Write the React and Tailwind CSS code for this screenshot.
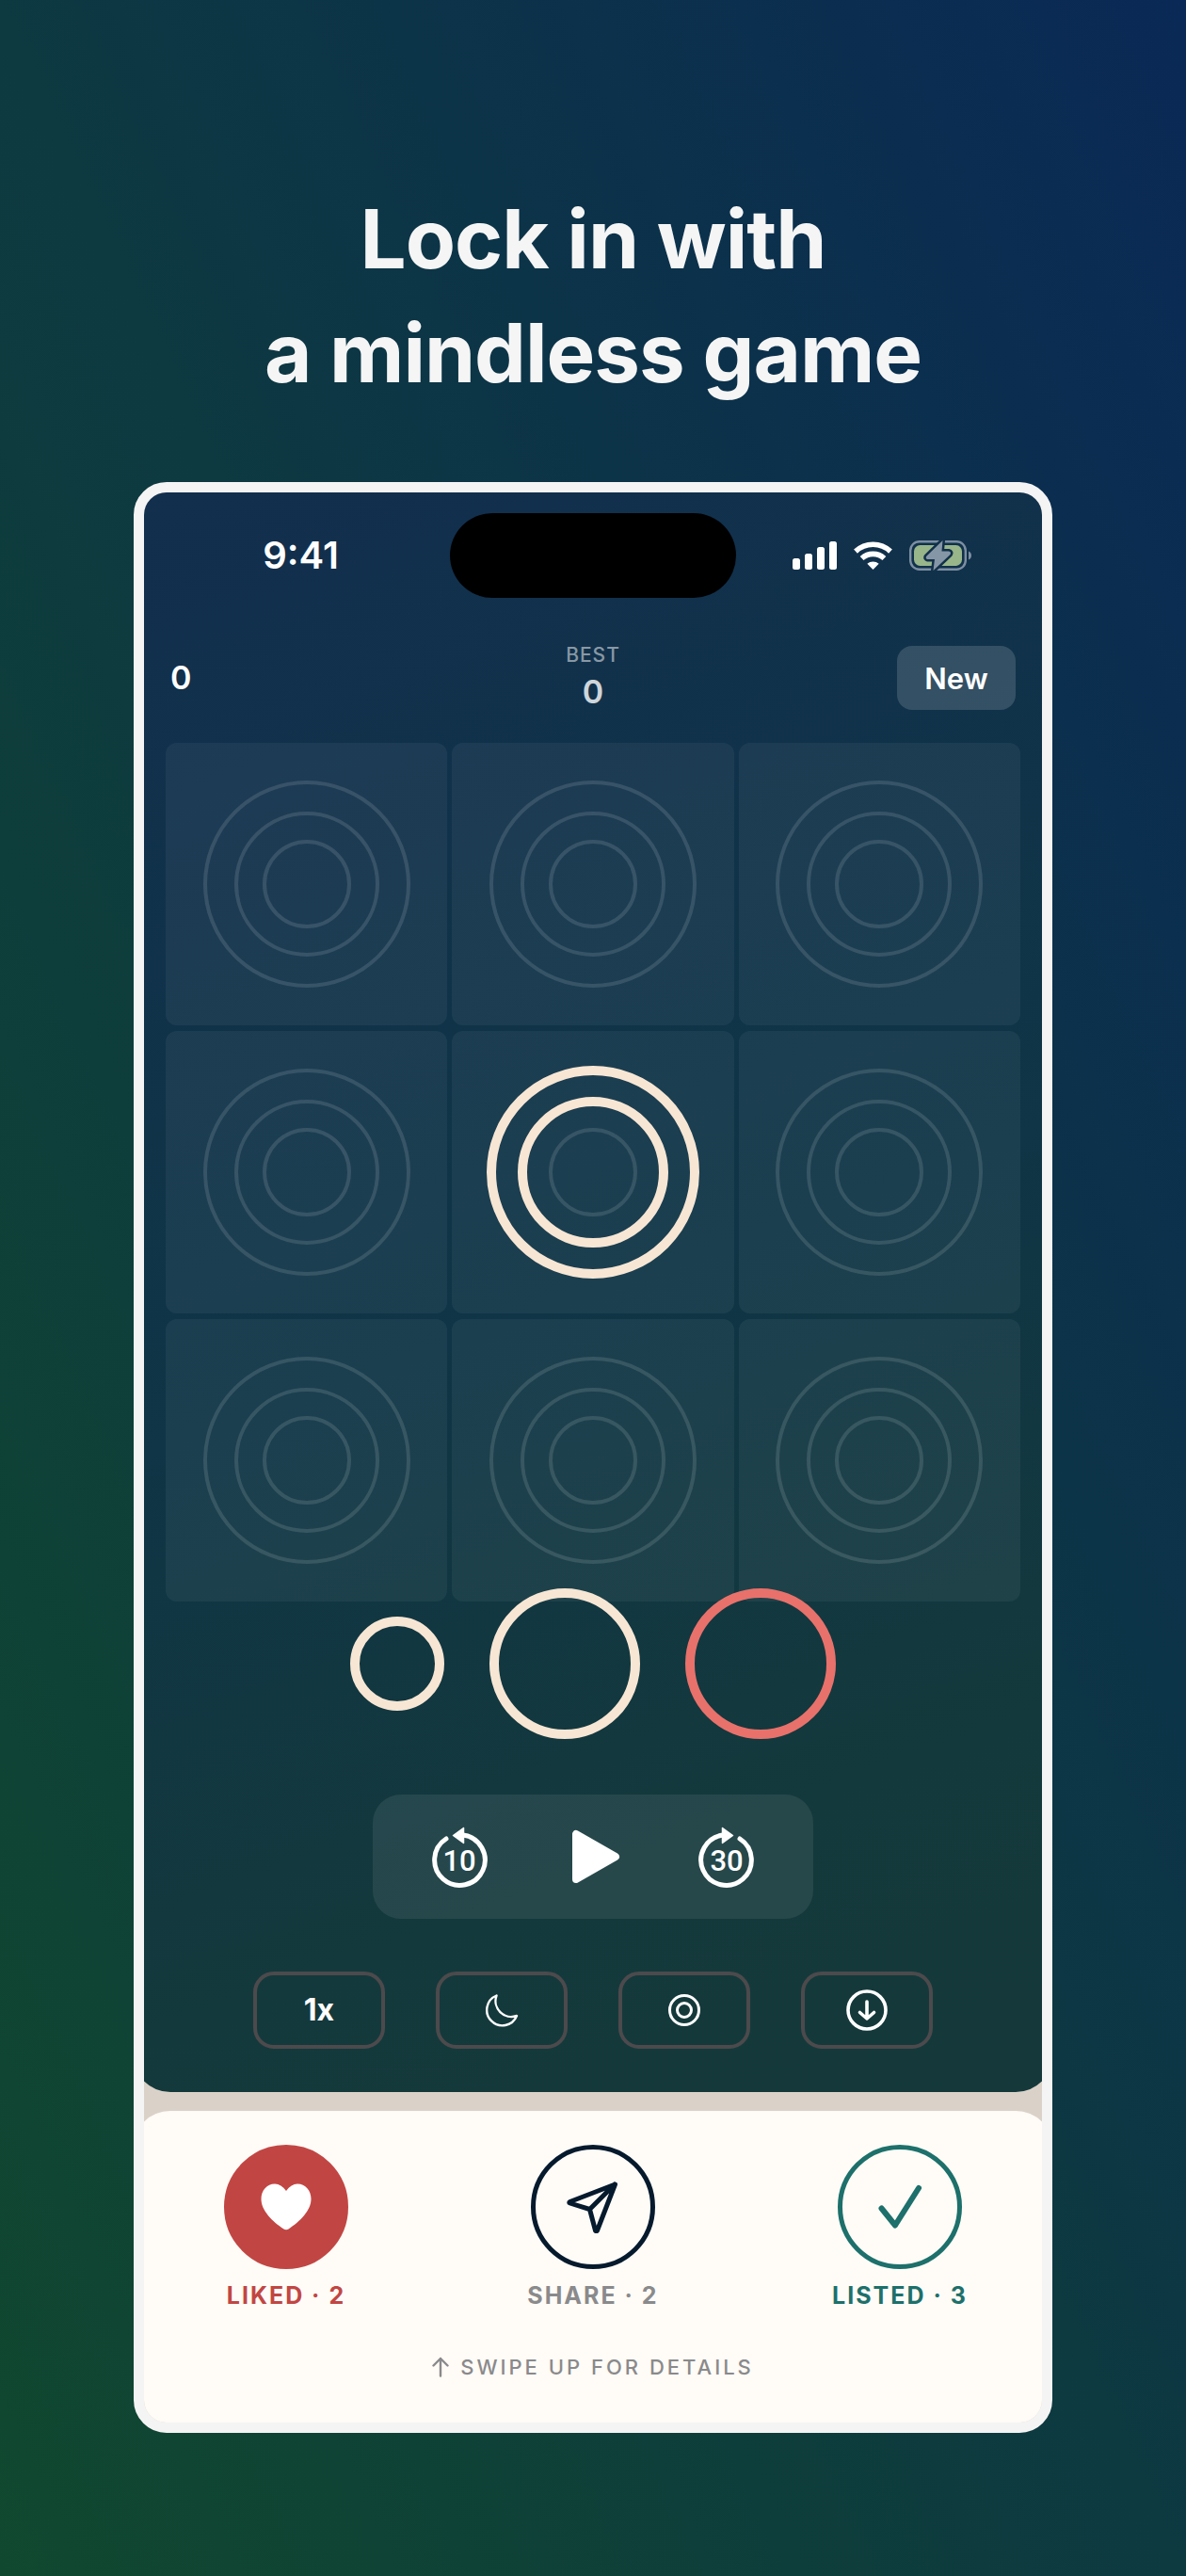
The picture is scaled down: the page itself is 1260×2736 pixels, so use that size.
import React, { useState } from 'react';
import { clsx } from 'clsx';

const CREAM = '#f7e6d4';
const CORAL = '#e8716b';
const RADII = { small: 45, medium: 75, large: 108 };
const SIZES = ['small', 'medium', 'large'];

const BOARD = [
  {}, {}, {},
  {}, { medium: CREAM, large: CREAM }, {},
  {}, {}, {},
];

const PIECES = [
  { id: 1, size: 'small', color: CREAM },
  { id: 2, size: 'medium', color: CREAM },
  { id: 3, size: 'medium', color: CORAL },
];

const StatusBar = () => (
  <div className="grid grid-cols-[1fr_304px_1fr] items-center">
    <span className="pl-2 text-center text-[40px] leading-none font-semibold">9:41</span>
    <div className="h-[90px] rounded-full bg-black" />
    <div className="flex items-center gap-[18px] pl-15">
      <svg className="h-[30px] w-[47px]" viewBox="0 0 47 30" fill="#fff">
        <rect x="0" y="18" width="8" height="12" rx="2.5" />
        <rect x="13" y="13" width="8" height="17" rx="2.5" />
        <rect x="26" y="6" width="8" height="24" rx="2.5" />
        <rect x="39" y="0" width="8" height="30" rx="2.5" />
      </svg>
      <svg className="h-[30px] w-[41px]" viewBox="0 0 41 30" fill="none" stroke="#fff" strokeWidth="5.6">
        <path d="M2 10.6a27 27 0 0 1 37 0" />
        <path d="M8.6 18a17.500 17.500 0 0 1 23.800 0" />
        <path d="M20.500 30l-6.200-6.200a9.300 9.300 0 0 1 12.400 0z" fill="#fff" stroke="none" />
      </svg>
      <svg className="h-8 w-[67px]" viewBox="0 0 67 32" fill="none">
        <rect x="1.200" y="1.200" width="58.600" height="29.600" rx="9.500" stroke="#7d8fa1" strokeWidth="2.400" />
        <rect x="5" y="5" width="51" height="22" rx="6.500" fill="#98b68a" />
        <path d="M63 11.500c4 1.500 4 7.500 0 9z" fill="#7d8fa1" />
        <path d="M35.500 0L18 17q-1 2.500 1.500 3H27L25.500 32 43.500 15q1.500-3-1.500-3.500H34.500z" fill="#8596a6" stroke="#13304a" strokeWidth="5" strokeLinejoin="round" paintOrder="stroke" />
      </svg>
    </div>
  </div>
);

const Cell = ({ rings }) => (
  <div className="flex h-[300px] items-center justify-center rounded-xl bg-white/5">
    <svg className="size-[226px]" viewBox="-113 -113 226 226" fill="none">
      {SIZES.map((size) => (
        <circle
          key={size}
          r={RADII[size]}
          stroke={rings[size] || '#ffffff'}
          strokeOpacity={rings[size] ? 1 : 0.12}
          strokeWidth={rings[size] ? 10 : 4}
        />
      ))}
    </svg>
  </div>
);

const Piece = ({ size, color }) => (
  <button
    aria-label={`${size} ring`}
    className={clsx('rounded-full border-10', size === 'small' ? 'size-[100px]' : 'size-[160px]')}
    style={{ borderColor: color }}
  />
);

const SkipIcon = ({ seconds, forward }) => (
  <svg className="h-[66px] w-[60px]" viewBox="0 0 60 66">
    <g transform={forward ? 'translate(60 0) scale(-1 1)' : undefined}>
      <path d="M16 14A26.800 26.800 0 1 0 34 10" fill="none" stroke="#fff" strokeWidth="5" strokeLinecap="round" />
      <path d="M23.500 10.500L34.500 2.500v16z" fill="#fff" stroke="#fff" strokeWidth="1.500" strokeLinejoin="round" />
    </g>
    <text x="30" y="48" textAnchor="middle" fill="#fff" fontSize="31" className="font-['Roboto'] font-medium">{seconds}</text>
  </svg>
);

const OptionButton = ({ label, onClick, children }) => (
  <button
    aria-label={label}
    onClick={onClick}
    className="flex h-[82px] w-[140px] items-center justify-center rounded-[22px] border-4 border-[#4c4a4c] text-[32px] leading-none font-bold"
  >
    {children}
  </button>
);

const ActionButton = ({ label, count, tone, circle, children }) => (
  <button className={clsx('flex w-1/3 flex-col items-center gap-3 text-[25px] leading-8 font-bold tracking-[2px]', tone)}>
    <span className={clsx('flex size-[132px] items-center justify-center rounded-full border-[5px]', circle)}>
      {children}
    </span>
    {label} · {count}
  </button>
);

const App = () => {
  const [playing, setPlaying] = useState(false);
  const [speed, setSpeed] = useState(1);

  return (
    <main className="flex min-h-screen flex-col items-center bg-[linear-gradient(to_top_right,#10482f_0%,#0d3941_50%,#0a2956_100%)] px-[142px] pt-[193px] pb-38 font-['Inter',sans-serif] text-white">
      <h1 className="text-center text-[87px] leading-[121px] font-bold tracking-[-1px] text-[#f5f5f5]">
        Lock in with
        <br />
        a mindless game
      </h1>

      <div className="mt-[77px] w-full overflow-hidden rounded-[35px] border-11 border-[#f4f4f4] bg-[#dad2c8]">

        {/* Player card */}
        <section className="-mx-3 rounded-b-[40px] bg-[linear-gradient(160deg,#122f4e_0%,#0f3546_50%,#14393c_80%,#15393a_100%)] px-3 pt-[22px] pb-[46px]">
          <StatusBar />

          <header className="mt-[46px] grid grid-cols-3 items-center px-7">
            <span className="text-[34px] leading-none font-semibold">0</span>
            <div className="flex flex-col items-center">
              <span className="text-[21px] leading-[30px] font-medium tracking-[1px] text-white/50">BEST</span>
              <span className="text-[34px] leading-12 font-semibold text-white/80">0</span>
            </div>
            <button className="h-[68px] w-[126px] justify-self-end rounded-2xl bg-white/15 text-[31px] leading-none font-semibold">
              New
            </button>
          </header>

          <div className="mt-[30px] grid grid-cols-3 gap-x-[5px] gap-y-[6px] px-[23px]">
            {BOARD.map((rings, i) => (
              <Cell key={i} rings={rings} />
            ))}
          </div>

          <div className="relative -mt-[14px] flex items-center justify-center gap-12">
            {PIECES.map((piece) => (
              <Piece key={piece.id} size={piece.size} color={piece.color} />
            ))}
          </div>

          {/* Transport controls */}
          <div className="mx-auto mt-[59px] flex h-[132px] w-[468px] items-center justify-between rounded-[30px] bg-white/8 px-[62px]">
            <button aria-label="Back 10 seconds"><SkipIcon seconds={10} /></button>
            <button aria-label={playing ? 'Pause' : 'Play'} onClick={() => setPlaying(!playing)}>
              <svg className="h-[58px] w-[58px]" viewBox="-6 0 58 58">
                <path d="M5 5v48L47 29z" fill="#fff" stroke="#fff" strokeWidth="8" strokeLinejoin="round" />
              </svg>
            </button>
            <button aria-label="Forward 30 seconds"><SkipIcon seconds={30} forward /></button>
          </div>

          <div className="mt-14 flex justify-center gap-[54px]">
            <OptionButton onClick={() => setSpeed(speed === 1 ? 2 : 1)}>{speed}x</OptionButton>
            <OptionButton label="Sleep timer">
              <svg className="size-9" viewBox="0 0 36 36" fill="none" stroke="#fff" strokeWidth="2.400" strokeLinejoin="round">
                <path d="M12.500 2.500A16.500 16.500 0 1 0 34 24 16.800 16.800 0 0 1 12.500 2.500z" />
              </svg>
            </OptionButton>
            <OptionButton label="Ring game">
              <svg className="size-9" viewBox="0 0 36 36" fill="none" stroke="#fff" strokeWidth="3">
                <circle cx="18" cy="18" r="15.500" />
                <circle cx="18" cy="18" r="7.500" />
              </svg>
            </OptionButton>
            <OptionButton label="Download">
              <svg className="size-11" viewBox="0 0 44 44" fill="none" stroke="#fff" strokeWidth="3.600" strokeLinecap="round" strokeLinejoin="round">
                <circle cx="22" cy="22" r="20" />
                <path d="M22 13v18M14.500 24.500L22 31l7.500-6.500" />
              </svg>
            </OptionButton>
          </div>
        </section>

        {/* Action sheet */}
        <section className="-mx-3 mt-5 rounded-t-[40px] bg-[#fffbf6] px-3 pt-9 pb-[45px]">
          <div className="-mx-3 flex">
            <ActionButton label="LIKED" count={2} tone="text-[#c14643]" circle="border-[#c14643] bg-[#c14643]">
              <svg className="h-[50px] w-[54px]" viewBox="0 0 54 50" fill="#fff">
                <path d="M27 8C23.500 3 19.500 0.500 15 0.500 6.500 0.500 0.500 7.500 0.500 16.500c0 12.500 12 24 24 32 1.500 1 3.500 1 5 0 12-8 24-19.500 24-32C53.500 7.500 47.500 0.500 39 0.500c-4.500 0-8.500 2.500-12 7.500z" />
              </svg>
            </ActionButton>
            <ActionButton label="SHARE" count={2} tone="text-[#8a8a8c]" circle="border-[#061a2e]">
              <svg className="size-14" viewBox="0 0 56 56" fill="none" stroke="#061a2e" strokeWidth="5" strokeLinejoin="round" strokeLinecap="round">
                <path d="M51.500 4L3.500 22.500q-1.500 1 0 1.500L24.500 30.500 30.500 53q1 1.500 2 0zM24.500 30.500L51 4" />
              </svg>
            </ActionButton>
            <ActionButton label="LISTED" count={3} tone="text-[#1d706b]" circle="border-[#1d706b]">
              <svg className="size-[50px]" viewBox="0 0 50 50" fill="none" stroke="#1d706b" strokeWidth="6" strokeLinejoin="round" strokeLinecap="round">
                <path d="M5.500 26.500L20 44.500 45 5" />
              </svg>
            </ActionButton>
          </div>
          <p className="mt-[46px] flex items-center justify-center gap-3 text-[22px] leading-7 font-medium tracking-[3px] text-[#8a8a8c]">
            <svg className="h-[22px] w-[18px]" viewBox="0 0 18 22" fill="none" stroke="currentColor" strokeWidth="2.400" strokeLinecap="round" strokeLinejoin="round">
              <path d="M9 20.500V2M1.500 9.500L9 2l7.500 7.500" />
            </svg>
            SWIPE UP FOR DETAILS
          </p>
        </section>
      </div>
    </main>
  );
};

export default App;
